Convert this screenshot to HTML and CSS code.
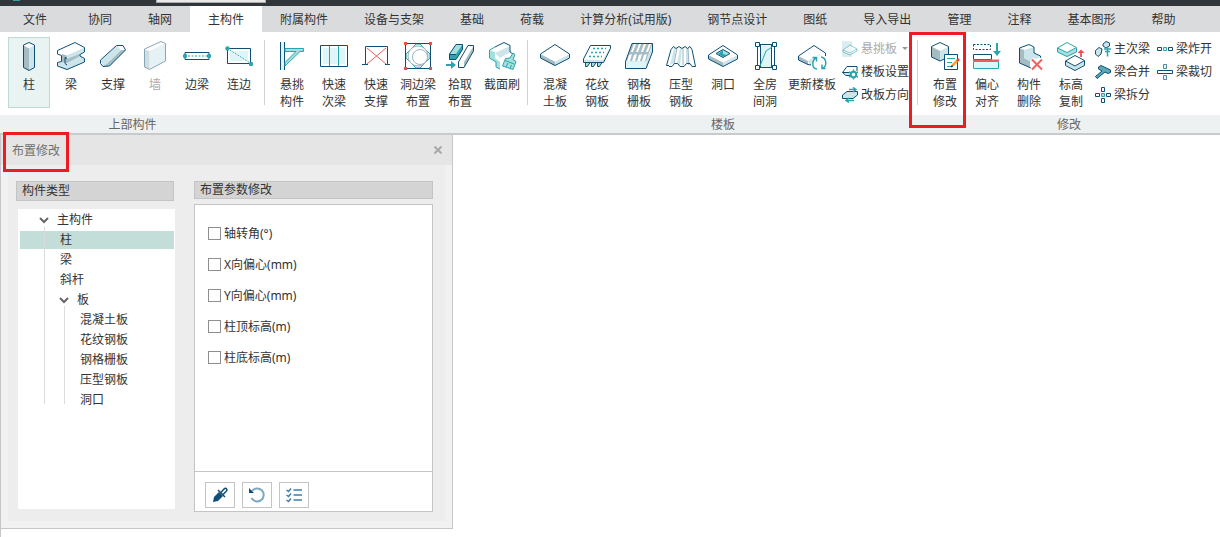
FILE: index.html
```html
<!DOCTYPE html>
<html lang="zh-CN">
<head>
<meta charset="utf-8">
<title>布置修改</title>
<link rel="stylesheet" href="styles.css">
</head>
<body>
<header class="topbar"><span class="app-dot"></span><span class="app-field"></span></header>
<nav class="tabs">
<button class="tab tab-first">文件</button><button class="tab">协同</button><button class="tab">轴网</button><button class="tab active">主构件</button><button class="tab">附属构件</button><button class="tab">设备与支架</button><button class="tab">基础</button><button class="tab">荷载</button><button class="tab">计算分析(试用版)</button><button class="tab">钢节点设计</button><button class="tab">图纸</button><button class="tab">导入导出</button><button class="tab">管理</button><button class="tab">注释</button><button class="tab">基本图形</button><button class="tab">帮助</button>
</nav>
<section class="ribbon">
  <div class="group group-first">
    <div class="tools">
      <button class="tool selected"><svg viewBox="0 0 32 32"><path class="g" d="M10.500 5.500 16 8.500V30.500L10.500 27.500Z"/><path class="l" d="M21.500 5.500 16 8.500V30.500L21.500 27.500Z"/><path class="w" d="M10.500 5 16 2.500 21.500 5 16 8Z"/><path class="n" d="M10.500 5 16 2.500 21.500 5V27.500L16 30.500 10.500 27.500Z"/></svg><span>柱</span></button>
      <button class="tool"><svg viewBox="0 0 32 32"><path class="l" d="M2.500 23.500 8 21 24 15 29.500 18V22L12 30 2.500 26.500Z"/><path class="g" d="M7 14 12 15.500 25 11V16L12 23 7 22Z"/><path class="w" d="M2.500 10.500 20 2.500 29.500 7.500 12 15.500Z"/><path class="l" d="M12 15.500 29.500 7.500V12L12 19Z"/><path class="n" d="M2.500 10.500 20 2.500 29.500 7.500V12L25 14.500V16L29.500 18.500V22L12 29.500 2.500 26V22.500L6.500 21.500V15.500L2.500 14Z"/><path class="n" d="M12 18.500 10 17.500V23.500L12 25"/></svg><span>梁</span></button>
      <button class="tool"><svg viewBox="0 0 32 32"><path class="l" d="M3.500 20 20 5.500H26L28.500 10 13 25.500 6 26.500Z"/><path class="g" d="M10 24 24.500 10 28.500 10 13 25.500 6 26.500Z"/><path class="w" d="M20 5.500H26L28.500 10 23.500 10Z"/><path class="n" d="M3.500 20 19.500 5.500H26L28.500 10 12.500 26 6 26.500 3.500 23.500Z"/></svg><span>支撑</span></button>
      <button class="tool disabled"><svg viewBox="0 0 32 32" class="faded"><path class="l" d="M10.500 11 26.500 3V21L10.500 29.500Z"/><path class="g" d="M5.500 9.500 10.500 11V29.500L5.500 27Z"/><path class="w" d="M5.500 9 22 1.500 26.500 3 10.500 11Z"/><path class="n" d="M5.500 9 22 1.500 26.500 3.500V21L10.500 29.500 5.500 27Z"/></svg><span>墙</span></button>
      <button class="tool"><svg viewBox="0 0 32 32"><path class="n w" d="M4 12.500H28V19.500H4Z"/><path class="t" stroke-dasharray="2 1.500" opacity=".5" stroke-width="2" d="M7 16H26"/><circle class="tf" cx="4" cy="16" r="2.200"/><circle class="tf" cx="28" cy="16" r="2.200"/></svg><span>边梁</span></button>
      <button class="tool"><svg viewBox="0 0 32 32"><path class="n w" d="M4.500 8.500H27.500V23.500H4.500Z"/><path class="p" d="M7 11H25V21H7Z"/><path class="t" stroke-dasharray="1.500 1.500" d="M4.500 8.500 28 23.500"/><circle class="tf" cx="4.500" cy="8.500" r="2.200"/><circle class="tf" cx="28" cy="24" r="2.200"/></svg><span>连边</span></button>
    </div>
    <div class="caption">上部构件</div>
  </div>
  <div class="group">
    <div class="tools">
      <button class="tool"><svg viewBox="0 0 32 32"><path class="p" d="M5 2H8V30H5Z"/><path class="n" d="M4.500 2V30M8.500 2V30"/><path class="a t" d="M9 8.500H27.500V11.500H24L9 26V22.500L20 11.500H9Z"/></svg><span>悬挑<br>构件</span></button>
      <button class="tool"><svg viewBox="0 0 32 32"><path class="n w" d="M2.500 5.500H29.500V26.500H2.500Z"/><path class="p" d="M5 8H27V24H5Z"/><path class="t" d="M11.500 6V26M20.500 6V26"/></svg><span>快速<br>次梁</span></button>
      <button class="tool"><svg viewBox="0 0 32 32"><path class="r" d="M7 8 26 24M26 8 7 24"/><path class="n" d="M2 24.500H5.500V6.500H27.500V24.500H30"/><path class="n" d="M5.500 24.500H8M25 24.500H27.500"/></svg><span>快速<br>支撑</span></button>
      <button class="tool"><svg viewBox="0 0 32 32"><path class="n w" d="M3.500 3.500H28.500V28.500H3.500Z"/><path class="t p" d="M4 14 14 4H18L28 14V18L18 28H14L4 18Z"/><path class="n" d="M3.500 3.500H28.500V28.500H3.500Z"/><circle class="s w" cx="16" cy="16" r="10"/><circle class="s w" cx="18" cy="17" r="7.500"/><path fill="#e9504f" d="M2 2H5V5H2ZM27 2H30V5H27ZM2 27H5V30H2ZM27 27H30V30H27Z"/></svg><span>洞边梁<br>布置</span></button>
      <button class="tool"><svg viewBox="0 0 32 32"><path class="tf" d="M5.500 14 12 4.500H18.500V9.500L12 19.500H5.500Z"/><path class="a" d="M5.500 14 12 4.500H18.500L12 14Z"/><path class="n" d="M5.500 14 12 4.500H18.500V9.500L12 19.500H5.500ZM5.500 14.500H12"/><path class="w" d="M14.500 22 24 5.500H29.500V11L20 27.500H14.500Z"/><path class="g" d="M20 22 29.500 6V11L20 27.500Z"/><path class="n" d="M14.500 22 24 5.500H29.500V11L20 27.500H14.500Z"/><path class="t" stroke-width="2" d="M2 25H9"/><path class="tf" d="M7 21 12 25 7 29Z"/></svg><span>拾取<br>布置</span></button>
      <button class="tool"><svg viewBox="0 0 32 32"><path class="w" d="M3.500 10 18 2.500 24 5V12L29 15 14 29 10 28V22L3.500 18Z"/><path class="a" d="M3.500 10 9 12V18L14 22V29L10 27V22L3.500 18Z"/><path class="l" d="M9 13 24 6V12L14 18Z"/><path class="t" d="M14 29 10 27V22L3.500 18V10L9 7"/><path class="n" d="M9 7 18 2.500 24 5.500V12L27 14"/><path class="a t" d="M24 18 27 13 29 14.500 27 19.500 30 21.500 27 29.500 16.500 26 19.500 18.500Z"/><path class="t" d="M19 20.500 28 24M20 27 22 23M24 28.500 25.500 25"/></svg><span>截面刷</span></button>
    </div>
    <div class="caption"></div>
  </div>
  <div class="group">
    <div class="tools">
      <button class="tool"><svg viewBox="0 0 32 32"><path class="g" d="M1.500 14 16 21.500V26L1.500 18Z"/><path class="l" d="M30.500 14 16 21.500V26L30.500 18Z"/><path class="w" d="M1.500 14 16 4.500 30.500 14 16 21.500Z"/><path class="n" d="M1.500 14 16 4.500 30.500 14V18L16 25.500 1.500 18Z"/></svg><span>混凝<br>土板</span></button>
      <button class="tool"><svg viewBox="0 0 32 32"><path class="l" d="M2.500 19 22 20 29.500 6V9L22.500 22.500H2.500Z"/><path class="w" d="M9.500 5.500H29.500L22 19.500H2.500Z"/><path class="n" d="M9.500 5.500H29.500V8.500L22.500 22.500H2.500V19Z"/><path class="n a" d="M4.500 22.500V26.500H6.500L9 22.500ZM10.500 22.500V26.500H12.500L15 22.500ZM16.500 22.500V26.500H18.500L21 22.500Z"/><path class="t" stroke-width="1.500" stroke-dasharray="2 2" d="M12 8.500H25M10 12.500H23M8 16.500H21"/></svg><span>花纹<br>钢板</span></button>
      <button class="tool"><svg viewBox="0 0 32 32"><path class="g" d="M9 3.500H29.500L23 21.500H2.500Z"/><path class="w" d="M11 4H13L10 12H8ZM16 4H18L15 12H13ZM21 4H23L20 12H18ZM26 4H28L25 12H23ZM6 15 9 14 7 21H4ZM11 15 14 14 12 21H9ZM16 15 19 14 17 21H14ZM21 15 24 14 22 21H19Z"/><path class="l" d="M23 21.500 29.500 4V12L23 28.500Z"/><path class="p" d="M2.500 21.500H23V28.500H2.500Z"/><path class="n" d="M9 3.500H29.500V12L23 28.500H2.500V21.500Z"/></svg><span>钢格<br>栅板</span></button>
      <button class="tool"><svg viewBox="0 0 32 32"><path class="w" d="M2 25.500 7 8 9 6.500H25L27 8 30 25.500Z"/><path class="l" d="M9 8 5 25 9 23 11 8ZM15 8 12 23 15 26 17 9ZM21 8V23L24 25 23 8Z"/><path class="s" d="M12 8 9 24M18 8V25M23 8 24 25"/><path class="n" d="M4 25.500H1.500L6 9.500 8.500 6.500 11 8.500 14 6.500 17 8.500 20 6.500 22.500 8.500 25 6.500 27 9.500 30.500 26.500H27L25 23.500 21.500 23.500 19 26.500H15L12.500 23.500 9.500 23.500 7 26.500H4"/></svg><span>压型<br>钢板</span></button>
      <button class="tool"><svg viewBox="0 0 32 32"><path class="g" d="M1.500 15 16 22V26.500L1.500 19Z"/><path class="l" d="M30.500 15 16 22V26.500L30.500 19Z"/><path class="w" d="M1.500 15 16 5.500 30.500 15 16 22.500Z"/><path class="n" d="M1.500 15 16 5.500 30.500 15V19L16 26.500 1.500 19Z"/><path class="a n" d="M9 13.500 16 9.500 23 13.500 16 17.500Z"/><path class="tf" d="M16 10V14L20 15 16 17 11 14Z"/></svg><span>洞口</span></button>
      <button class="tool"><svg viewBox="0 0 32 32"><path class="p" d="M12 6H22V27H12Z"/><path class="n" d="M8.500 5V27M11.500 5V27M22.500 5V27M25.500 5V27M8 4.500H25M8 27.500H25"/><path class="t" d="M23 7 17 11 11 26"/><path class="w n" d="M6.500 2.500H10.500V6.500H6.500ZM23.500 2.500H27.500V6.500H23.500ZM6.500 25.500H10.500V29.500H6.500ZM23.500 25.500H27.500V29.500H23.500Z"/></svg><span>全房<br>间洞</span></button>
      <button class="tool wide"><svg viewBox="0 0 32 32"><path class="w" d="M2.500 16 18 5.500 29.500 13V17L14 25 2.500 20Z"/><path class="g" d="M2.500 16 12 21V25L2.500 20Z"/><path class="l" d="M12 21 24 14V18L14 25Z"/><path class="n" d="M15 25 12 24.500 2.500 20V16L18 5.500 29.500 13V16"/><circle cx="23" cy="23" r="7.500" fill="#fff"/><path class="t" stroke-width="1.500" d="M25 17C31 18 31 26 27 28M21 29C15 28 16 20 20 18M16.500 17.500H20.500V21.500M29.500 28.500H26V24.500"/></svg><span>更新楼板</span></button>
      <div class="stack stack-slab">
        <button class="mini disabled"><svg viewBox="0 0 16 16"><path class="l" opacity=".7" d="M0 0H10V16H0Z"/><path class="w t" opacity=".55" d="M1 9 8 4 15 8V10L8 14 1 11Z"/><path class="t" opacity=".5" d="M1 9 8 12 15 8"/></svg>悬挑板<i class="caret"></i></button>
        <button class="mini"><svg viewBox="0 0 16 16"><path class="w n" d="M.500 8.500 5 2.500H15V7M8 11.500H4L.500 8.500H8"/><path class="l" d="M3 9H8V11H4Z"/><circle class="t" stroke-width="2" cx="11.500" cy="10.500" r="2.800"/><path class="t" stroke-width="1.500" d="M11.500 5.500V7.500M11.500 13.500V15.500M7 8 9 9M14 12 16 13M7 13 9 12M14 9 16 8"/></svg>楼板设置</button>
        <button class="mini"><svg viewBox="0 0 16 16"><path class="l n" d="M.500 8 5 4.500H15.500V8L11 11.500H.500Z"/><path class="t" stroke-width="1.500" d="M7 2.500H13M11 .500 14 2.500 11 5M12 13.500H5M7 11 4 13.500 7 15.500"/></svg>改板方向</button>
      </div>
    </div>
    <div class="caption">楼板</div>
  </div>
  <div class="group group-last">
    <div class="tools">
      <button class="tool marked"><svg viewBox="0 0 32 32"><path class="w" d="M2.500 6.500 11 2.500 19.500 6.500 11 11Z"/><path class="g" d="M2.500 6.500 11 11V21L2.500 17Z"/><path class="l" d="M19.500 6.500 11 11V21L19.500 17Z"/><path class="n" d="M2.500 6.500 11 2.500 19.500 6.500V17L11 21 2.500 17Z"/><path class="w n" d="M15.500 14.500H28.500V29.500H15.500Z"/><path class="t" d="M18 18.500H26M18 22.500H23M18 26.500H24"/><path fill="none" stroke="#f5a623" stroke-width="2.500" d="M23.500 25.500 28.500 20.500"/><path stroke="#e5484d" stroke-width="2.500" d="M28 21 30 19"/><path stroke="#222" stroke-width="1.500" d="M22 27 23.500 25.500"/></svg><span>布置<br>修改</span><i class="mark mark-tool"></i></button>
      <button class="tool"><svg viewBox="0 0 32 32"><path class="n" stroke-dasharray="2 1.500" d="M2.500 4.500H19.500V9.500H2.500Z"/><path class="t" stroke-width="2" d="M26 3V12"/><path class="tf" d="M22 11 26 16 30 11Z"/><path class="w n" d="M2.500 14.500H20.500V19.500H2.500Z"/><path class="p t" d="M2.500 21.500H27.500V28.500H2.500Z"/><path class="r" stroke-width="2" d="M2 20.500H28"/></svg><span>偏心<br>对齐</span></button>
      <button class="tool"><svg viewBox="0 0 32 32"><path class="w" d="M6.500 8 16 4.500 21 7V13L28 17V20L17 28 6.500 23Z"/><path class="g" d="M6.500 8 11 10V18L17 21V28L6.500 23Z"/><path class="l" d="M11 10 21 7V13L28 17 17 21 11 18Z"/><path class="n" d="M18 28 6.500 23V8L16 4.500 21 7V13L27.500 16V18"/><path d="M19 19 29 29M29 19 19 29" stroke="#fff" stroke-width="4"/><path class="r" stroke-width="2" d="M19 19.500 29 29.500M29 19.500 19 29.500"/></svg><span>构件<br>删除</span></button>
      <button class="tool"><svg viewBox="0 0 32 32"><path class="a" d="M2.500 8 12 12 21.500 8V12L12 17 2.500 12Z"/><path class="w t" d="M2.500 8 12 2.500 21.500 7.500 12 12.500Z"/><path class="t" d="M2.500 8V12L12 16.500 21.500 12V8"/><path class="r" stroke-width="2" d="M26 17V12"/><path fill="#e9504f" d="M22.500 13 26 9.500 29.500 13Z"/><path class="l" d="M10.500 21 20 26 29.500 21V25L20 30.500 10.500 25Z"/><path class="w n" d="M10.500 21 20 15.500 29.500 20.500 20 26Z"/><path class="n" d="M10.500 21V25.500L20 30.500 29.500 25.500V21"/></svg><span>标高<br>复制</span></button>
      <div class="stack stack-beam">
        <button class="mini"><svg viewBox="0 0 16 16"><path class="l n" d="M.500 9.500 4 6.500 7 8 6 13 3 15.500.500 13ZM8 3 11 .500 14.500 2V5L11 7 8 5Z"/><path class="t" stroke-width="1.500" d="M9 8H16M12.500 6V15.500M10 10.500H15"/></svg>主次梁</button>
        <button class="mini"><svg viewBox="0 0 16 16"><path class="n" fill="#5aa9b5" d="M3.500 3 6 1.500 15.500 6V8.500L13 9.500 10 8 2 14.500.500 12.500 7 7 3.500 5Z"/></svg>梁合并</button>
        <button class="mini"><svg viewBox="0 0 16 16"><path class="n w" d="M6.500.500H9.500V4.500H6.500ZM6.500 11.500H9.500V15.500H6.500ZM.500 6.500H4.500V9.500H.500ZM11.500 6.500H15.500V9.500H11.500Z"/><path class="a t" d="M6.500 6.500H9.500V9.500H6.500Z"/></svg>梁拆分</button>
      </div>
      <div class="stack stack-cut">
        <button class="mini"><svg viewBox="0 0 16 16"><path class="n w" d="M.500 6.500H4.500V9.500H.500ZM11.500 6.500H15.500V9.500H11.500Z"/><path class="p t" d="M6.500 6.500H9.500V9.500H6.500Z"/></svg>梁炸开</button>
        <button class="mini"><svg viewBox="0 0 16 16"><path class="n w" d="M.500 6.500H15.500V9.500H.500Z"/><path class="p n" opacity=".7" d="M6.500.500H9.500V4.500H6.500ZM6.500 11.500H9.500V15.500H6.500Z"/></svg>梁裁切</button>
      </div>
    </div>
    <div class="caption">修改</div>
  </div>
</section>
<main class="canvas">
  <section class="panel">
    <div class="panel-title"><h1>布置修改</h1><button class="close" aria-label="关闭"><svg viewBox="0 0 8 8"><path d="M.500.500 7.500 7.500M7.500.500.500 7.500"/></svg></button><i class="mark mark-title"></i></div>
    <div class="panel-body">
      <div class="col-types">
        <h2 class="bar bar-types">构件类型</h2>
        <ul class="tree">
          <li><div class="row root"><svg class="chev" viewBox="0 0 10 8"><path d="M1 2 5 6 9 2"/></svg>主构件</div>
            <ul class="branch">
              <li class="row leaf current">柱</li>
              <li class="row leaf">梁</li>
              <li class="row leaf">斜杆</li>
              <li><div class="row sub"><svg class="chev" viewBox="0 0 10 8"><path d="M1 2 5 6 9 2"/></svg>板</div>
                <ul class="branch">
                  <li class="row leaf">混凝土板</li>
                  <li class="row leaf">花纹钢板</li>
                  <li class="row leaf">钢格栅板</li>
                  <li class="row leaf">压型钢板</li>
                  <li class="row leaf">洞口</li>
                </ul>
              </li>
            </ul>
          </li>
        </ul>
      </div>
      <div class="col-params">
        <h2 class="bar">布置参数修改</h2>
        <div class="params">
          <div class="checks">
            <label><input type="checkbox">轴转角(°)</label>
            <label><input type="checkbox">X向偏心(mm)</label>
            <label><input type="checkbox">Y向偏心(mm)</label>
            <label><input type="checkbox">柱顶标高(m)</label>
            <label><input type="checkbox">柱底标高(m)</label>
          </div>
          <div class="actions">
            <button aria-label="拾取"><svg viewBox="0 0 16 16"><path fill="#0f4f76" d="M1 15 2 10 7 5 11 9 6 14Z"/><path fill="none" stroke="#0f4f76" stroke-width="1.500" d="M6 3 13 10M8.500 6 12 2C14 0 16 3 14 4.500L10.500 8"/></svg></button>
            <button aria-label="重置"><svg viewBox="0 0 16 16"><path fill="none" stroke="#7fa9c2" stroke-width="2" d="M3 4A6.500 6.500 0 1 1 2.500 11"/><path fill="#0f4f76" d="M0 1V6H5Z"/></svg></button>
            <button aria-label="全选"><svg viewBox="0 0 16 16"><path fill="none" stroke="#3f7ea8" stroke-width="1.500" d="M7.500 3H16M7.500 8H16M7.500 13H16M.500 3 2.500 4.500 5 1.500M.500 8 2.500 9.500 5 6.500M.500 13 2.500 14.500 5 11.500"/></svg></button>
          </div>
        </div>
      </div>
    </div>
  </section>
</main>
</body>
</html>
```
FILE: styles.css
```css
* { box-sizing: border-box; }
html, body { height: 100%; }
body {
  margin: 0;
  display: flex;
  flex-direction: column;
  background: #fff;
  color: #333;
  font: 12px/17px "Noto Sans", "Noto Sans CJK SC", sans-serif;
  overflow: hidden;
}
button { border: 0; padding: 0; background: none; color: inherit; font: inherit; white-space: nowrap; }
ul { margin: 0; padding: 0; list-style: none; }
h1, h2 { margin: 0; font: inherit; }
svg { display: block; flex: none; }

.topbar { height: 6px; flex: none; background: #31363b; display: flex; align-items: flex-start; padding-left: 13px; }
.app-dot { width: 7px; height: 1px; background: #2ba5ad; }
.app-field { width: 110px; height: 3px; margin-left: 136px; background: #e9e9e9; border: 1px solid #aaa; border-top: 0; }

.tabs { display: flex; flex: none; height: 26px; background: #dadbdd; }
.tab { padding: 2px 18px 0; line-height: 24px; }
.tab-first { padding: 2px 23px 0; }
.tab.active { background: #fff; }

.ribbon { display: flex; flex: none; border-bottom: 2px solid #c8cacb; }
.group { display: flex; flex-direction: column; flex: none; }
.group-last { flex: 1; min-width: 0; }
.tools { display: flex; height: 83px; padding: 5px 5px 7px 6px; position: relative; }
.group-first .tools { padding-left: 8px; }
.tools::after { content: ""; position: absolute; right: 0; top: 8px; bottom: 10px; width: 1px; background: #d2d2d2; }
.group-last .tools::after { display: none; }
.caption { height: 18px; padding-top: 2px; line-height: 16px; background: #edf1f2; text-align: center; color: #666; }

.tool { width: 42px; display: flex; flex-direction: column; align-items: center; gap: 4px; padding-top: 3px; position: relative; }
.tool svg { width: 32px; height: 32px; }
.tool.wide { width: 52px; }
.tool.selected { background: #e9f3f2; border: 1px solid #bfdad5; padding-top: 2px; }
.disabled { color: #aaa; }
.faded { opacity: .5; }

.stack { display: flex; flex-direction: column; gap: 6px; padding-top: 3px; }
.stack-slab { width: 71px; margin-left: 4px; }
.stack-beam { margin-left: 3px; width: 55px; }
.stack-cut { margin-left: 7px; width: 55px; }
.mini { display: flex; align-items: center; gap: 3px; height: 17px; }
.mini svg { width: 16px; height: 16px; }
.caret { border: 3px solid transparent; border-top-color: #999; border-bottom: 0; margin-left: 2px; flex: none; }

.n { stroke: #0f4f76; }
.t { stroke: #2ba5ad; }
.s { stroke: #9fb3c4; }
.r { stroke: #f0605e; }
.n, .t, .s, .r { fill: none; }
.n[fill] { fill: #5aa9b5; }
.w { fill: #fff; }
.l { fill: #cce5ea; }
.p { fill: #dff6f8; }
.g { fill: #a5bcc3; }
.a { fill: #a3e0de; }
.tf { fill: #2ba5ad; }

.mark { position: absolute; border: 3px solid #ed1c24; z-index: 2; pointer-events: none; }
.mark-tool { left: -15px; top: -5px; width: 57px; height: 96px; }
.mark-title { left: 2px; top: -3px; width: 66px; height: 40px; }

.canvas { flex: 1; border-left: 1px solid #c6c7c8; }
.panel { width: 452px; background: #f1f1f1; border: solid #c6c7c8; border-width: 0 1px 1px 0; padding-bottom: 7px; }
.panel-title { position: relative; display: flex; align-items: center; justify-content: space-between; height: 30px; padding: 0 9px 0 11px; background: #e5e5e5; color: #707070; }
.close { padding: 1px; }
.close svg { width: 8px; height: 8px; stroke: #a8a8a8; stroke-width: 2; }
.panel-body { display: flex; gap: 19px; margin: 0 7px; padding: 16px 12px 9px 8px; background: #ededed; }
.bar { height: 18px; line-height: 16px; padding-left: 5px; background: #d4d4d4; border: 1px solid #c4c4c4; }
.bar-types { height: 20px; line-height: 18px; margin-right: 1px; }
.col-types { width: 159px; display: flex; flex-direction: column; gap: 8px; padding-bottom: 3px; }
.tree { margin-left: 2px; flex: 1; background: #fff; padding: 1px 1px 0 2px; }
.row { height: 20px; line-height: 20px; display: flex; align-items: center; }
.chev { width: 10px; height: 8px; margin-right: 8px; fill: none; stroke: #666; stroke-width: 2; }
.root { padding-left: 19px; }
.branch { position: relative; }
.branch::before { content: ""; position: absolute; left: 24px; top: -4px; bottom: 6px; width: 1px; background: #dcdcdc; }
.branch .branch::before { left: 44px; }
.sub { padding-left: 39px; }
.leaf { padding-left: 40px; }
.branch .branch .leaf { padding-left: 60px; }
.current { background: #c3ded9; height: 18px; line-height: 18px; margin: 1px 0; }

.col-params { flex: 1; display: flex; flex-direction: column; gap: 5px; }
.params { background: #fff; border: 1px solid #c4c4c4; }
.checks { display: flex; flex-direction: column; gap: 14px; height: 266px; padding: 20px 13px; }
.checks label { display: flex; align-items: center; gap: 3px; }
.checks input { appearance: none; width: 13px; height: 13px; margin: 0; border: 1px solid #8e8e8e; background: #fff; }
.actions { display: flex; gap: 7px; border-top: 1px solid #c4c4c4; padding: 10px 10px 3px; }
.actions button { display: grid; place-items: center; width: 30px; height: 26px; background: #fff; border: 1px solid #c4c4c4; }
.actions svg { width: 16px; height: 16px; }
```
